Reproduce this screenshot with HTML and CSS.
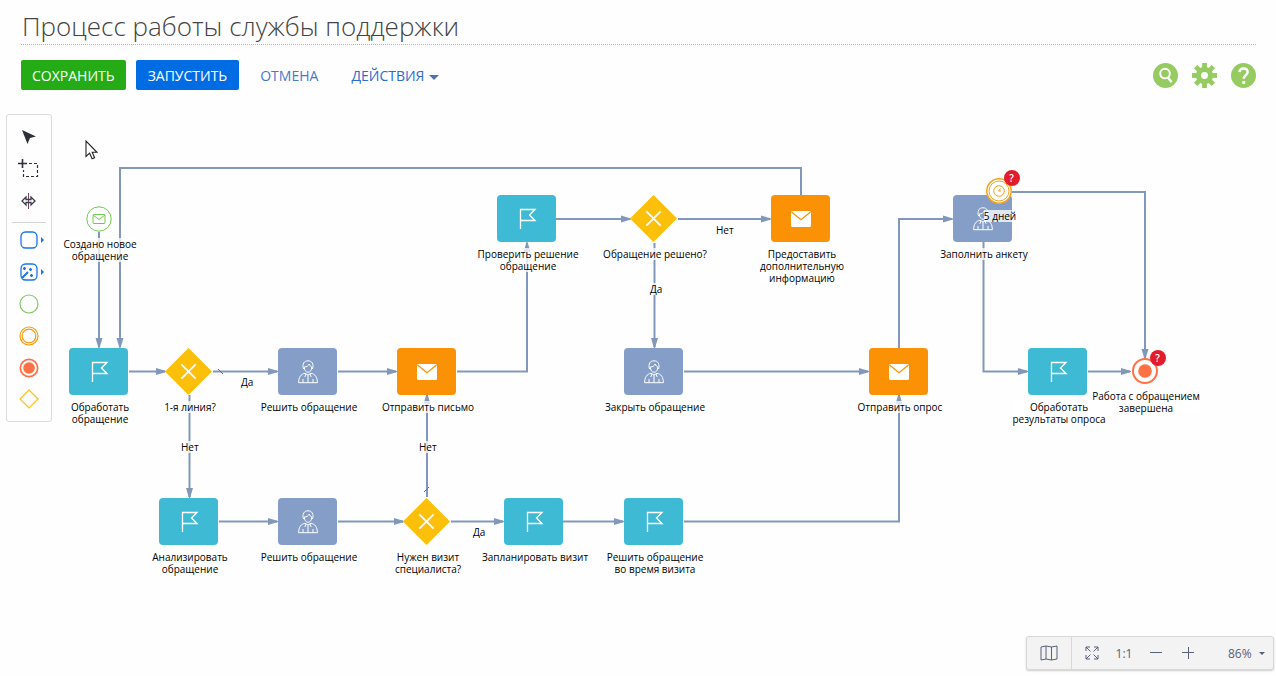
FILE: index.html
```html
<!DOCTYPE html>
<html lang="ru">
<head>
<meta charset="utf-8">
<meta name="viewport" content="width=device-width, initial-scale=1">
<title>Процесс работы службы поддержки</title>
<link rel="stylesheet" href="styles.css">
</head>
<body>
<svg class="sprite" aria-hidden="true">
  <symbol id="flag" viewBox="0 0 20 22"><path d="M3.500 21V1.500H18L12.500 7L18 12.500H3.500" fill="none" stroke="currentColor" stroke-width="1.300"/></symbol>
  <symbol id="user" viewBox="0 0 20 24"><g fill="none" stroke="currentColor"><path d="M5.500 9C4 4 6 .8 10 .8S16 4 14.500 9"/><path d="M6.300 7c2.500 0 4-1.200 5-3 .5 1.500 1.300 2.500 2.500 3 0 3-1.500 5.300-3.700 5.300S6.300 10 6.300 7z"/><path d="M7 13.300C3 14 .7 17 .6 22.700h18.800C19.300 17 17 14 13 13.300M7 13.300l3 1.700 3-1.700M10 15v7.700M5 22.500V19M15 22.500V19M8 14l-1.200 3M12 14l1.200 3"/></g></symbol>
  <symbol id="mail" viewBox="0 0 22 16"><rect x="1" y="0" width="20" height="16" rx="1.500" fill="currentColor"/><path d="M1.500 1L11 8.800 20.500 1" fill="none" stroke="#fb9104" stroke-width="1.200"/></symbol>
  <symbol id="cross" viewBox="0 0 46 46"><path d="M23 0L46 23 23 46 0 23z" fill="#fdc00a"/><path d="M16 16L30 30M30 16L16 30" stroke="#fff" stroke-width="1.600"/></symbol>
</svg>

<header class="header">
  <h1 class="title">Процесс работы службы поддержки</h1>
  <div class="actions">
    <button class="btn btn-save" type="button">СОХРАНИТЬ</button>
    <button class="btn btn-run" type="button">ЗАПУСТИТЬ</button>
    <button class="btn btn-cancel" type="button">ОТМЕНА</button>
    <button class="btn btn-menu" type="button" aria-haspopup="true">ДЕЙСТВИЯ<span class="caret"></span></button>
    <div class="tools">
      <button class="tool" type="button" aria-label="Поиск"><svg viewBox="0 0 26 26"><circle cx="13" cy="13" r="13" fill="#95cb61"/><circle cx="12.500" cy="11" r="5" fill="none" stroke="#fff" stroke-width="2"/><path d="M15.500 15l4 5" stroke="#fff" stroke-width="2.400"/></svg></button>
      <button class="tool" type="button" aria-label="Настройки"><svg viewBox="0 0 26 26"><g fill="#95cb61"><rect x="10.500" y="0" width="5" height="26"/><rect x="10.500" y="0" width="5" height="26" transform="rotate(45 13 13)"/><rect x="10.500" y="0" width="5" height="26" transform="rotate(90 13 13)"/><rect x="10.500" y="0" width="5" height="26" transform="rotate(135 13 13)"/><circle cx="13" cy="13" r="9"/></g><circle cx="13" cy="13" r="3.600" fill="#fff"/></svg></button>
      <button class="tool" type="button" aria-label="Справка"><svg viewBox="0 0 26 26"><circle cx="13" cy="13" r="13" fill="#95cb61"/><path d="M8.800 9.500C9 6.800 10.700 5.800 13 5.800c2.500 0 4.300 1.300 4.300 3.600 0 3.200-4 3.400-4 7.100" fill="none" stroke="#fff" stroke-width="2.600"/><rect x="11.800" y="18.800" width="3" height="3" fill="#fff"/></svg></button>
    </div>
  </div>
</header>

<main class="workspace">
  <div class="canvas">
    <svg class="wires" aria-hidden="true">
      <defs><marker id="arrow" viewBox="0 0 10 8" refX="9" refY="4" markerWidth="10" markerHeight="8" markerUnits="userSpaceOnUse" orient="auto"><path d="M0 .5L10 3.500V4.500L0 7.500z"/></marker></defs>
      <g transform="translate(0 -100)">
        <path d="M99 232V347"/>
        <path d="M801 195V168H120V347"/>
        <path d="M129 371.500H165"/>
        <path d="M213 371.500H277"/>
        <path d="M338 371.500H396"/>
        <path class="plain" d="M457 371.500H527V250"/>
        <path d="M527 260V243"/>
        <path d="M556 219H630"/>
        <path d="M678 219H770"/>
        <path d="M654.500 243V347"/>
        <path d="M684 371.500H868"/>
        <path d="M899 348V219H952"/>
        <path d="M983.500 242V371.500H1027"/>
        <path d="M1012 192H1145V358"/>
        <path d="M1088 371.500H1130"/>
        <path d="M189.500 395V497"/>
        <path d="M219 521.500H277"/>
        <path d="M338 521.500H403"/>
        <path d="M451 521.500H503"/>
        <path d="M563 521.500H623"/>
        <path d="M684 521.500H899V395"/>
        <path d="M427 497V395"/>
        <path class="slash" d="M218 369l5 5M424 492l5-5"/>
      </g>
    </svg>

    <div class="node n1"><span class="event"><svg viewBox="0 0 26 26" fill="none" stroke="#70c850"><circle cx="13" cy="13" r="12.200" fill="#fff"/><rect x="7" y="8.500" width="12" height="9" rx="1"/><path d="M7 9l6 4.500L19 9"/></svg></span><span class="label">Создано новое<br>обращение</span></div>
    <div class="node n2"><span class="shape teal"><svg class="flag"><use href="#flag"/></svg></span><span class="label">Обработать<br>обращение</span></div>
    <div class="node n3"><svg class="gate"><use href="#cross"/></svg><span class="label">1-я линия?</span></div>
    <div class="node n4"><span class="shape blue"><svg class="user"><use href="#user"/></svg></span><span class="label">Решить обращение</span></div>
    <div class="node n5"><span class="shape orange"><svg class="mail"><use href="#mail"/></svg></span><span class="label">Отправить письмо</span></div>
    <div class="node n6"><span class="shape teal"><svg class="flag"><use href="#flag"/></svg></span><span class="label">Проверить решение<br>обращение</span></div>
    <div class="node n7"><svg class="gate"><use href="#cross"/></svg><span class="label">Обращение решено?</span></div>
    <div class="node n8"><span class="shape orange"><svg class="mail"><use href="#mail"/></svg></span><span class="label">Предоставить<br>дополнительную<br>информацию</span></div>
    <div class="node n9"><span class="shape blue"><svg class="user"><use href="#user"/></svg></span><span class="label">Закрыть обращение</span></div>
    <div class="node n10"><span class="shape orange"><svg class="mail"><use href="#mail"/></svg></span><span class="label">Отправить опрос</span></div>
    <div class="node n11"><span class="shape blue"><svg class="user"><use href="#user"/></svg></span><span class="label">Заполнить анкету</span></div>
    <div class="node n12"><span class="shape teal"><svg class="flag"><use href="#flag"/></svg></span><span class="label">Обработать<br>результаты опроса</span></div>
    <div class="node n13"><span class="shape teal"><svg class="flag"><use href="#flag"/></svg></span><span class="label">Анализировать<br>обращение</span></div>
    <div class="node n14"><span class="shape blue"><svg class="user"><use href="#user"/></svg></span><span class="label">Решить обращение</span></div>
    <div class="node n15"><svg class="gate"><use href="#cross"/></svg><span class="label">Нужен визит<br>специалиста?</span></div>
    <div class="node n16"><span class="shape teal"><svg class="flag"><use href="#flag"/></svg></span><span class="label">Запланировать визит</span></div>
    <div class="node n17"><span class="shape teal"><svg class="flag"><use href="#flag"/></svg></span><span class="label">Решить обращение<br>во время визита</span></div>
    <div class="node n18"><span class="event"><svg viewBox="0 0 26 26" fill="none" stroke="#fba21c"><circle cx="13" cy="13" r="12.200" fill="#fff" stroke-width="1.500"/><circle cx="13" cy="13" r="10"/><circle cx="13" cy="13" r="5.300"/><path d="M14.500 10.500L12.500 13H15"/></svg><span class="badge">?</span></span><span class="label">5 дней</span></div>
    <div class="node n19"><span class="event"><svg viewBox="0 0 26 26"><circle cx="13" cy="13" r="12" fill="#fff" stroke="#ff7043" stroke-width="2"/><circle cx="13" cy="13" r="6.800" fill="#ff7043"/></svg><span class="badge">?</span></span><span class="label">Работа с обращением<br>завершена</span></div>

    <span class="label flow f1">Да</span>
    <span class="label flow f2">Нет</span>
    <span class="label flow f3">Нет</span>
    <span class="label flow f4">Да</span>
    <span class="label flow f5">Нет</span>
    <span class="label flow f6">Да</span>
    <svg class="pointer" viewBox="0 0 13 20" aria-hidden="true"><path d="M1 1v15.500l3.600-3.300 2.500 5.600 2.500-1.100L7.200 12.300H12z" fill="#fff" stroke="#222" stroke-width="1.100"/></svg>
  </div>

  <nav class="palette" aria-label="Элементы">
    <button type="button" aria-label="Выбор"><svg viewBox="0 0 32 32"><path d="M9 9l14 6.500-6 1.500-2.500 6z" fill="#2d3038"/></svg></button>
    <button type="button" aria-label="Выделить область"><svg viewBox="0 0 32 32" fill="none" stroke="#2d3038"><path d="M9.500 6v9M5 10.500h9" stroke-width="1.600"/><path d="M16 10.500H24.500V23.500H10.500V17" stroke-dasharray="3 2" stroke-width="1.200"/></svg></button>
    <button type="button" aria-label="Раздвинуть"><svg viewBox="0 0 32 32" fill="none" stroke="#3c3f49"><path d="M15.500 8v16" stroke="#74456f"/><path d="M13 12l-4 4 4 4v-2.500h5V20l4-4-4-4v2.500h-5z" stroke-width="1.300"/></svg></button>
    <hr>
    <button type="button" aria-label="Действия пользователя"><svg viewBox="0 0 32 32"><rect x="8" y="8" width="16" height="16" rx="4.500" fill="#fff" stroke="#1a74e8" stroke-width="1.300"/><path d="M28 13l3 3-3 3z" fill="#1a74e8"/></svg></button>
    <button type="button" aria-label="Действия системы"><svg viewBox="0 0 32 32"><rect x="8" y="8" width="16" height="16" rx="4.500" fill="#fff" stroke="#1a74e8" stroke-width="1.300"/><path d="M9 22l6-6" stroke="#1a74e8" stroke-width="2"/><path d="M11.500 11v3M10 12.500h3M17.500 12v3M16 13.500h3M18.500 18v3M17 19.500h3" stroke="#1a74e8" stroke-width="1.400"/><path d="M28 13l3 3-3 3z" fill="#1a74e8"/></svg></button>
    <button type="button" aria-label="Начальное событие"><svg viewBox="0 0 32 32"><circle cx="16" cy="16" r="9" fill="none" stroke="#7fc95f" stroke-width="1.200"/></svg></button>
    <button type="button" aria-label="Промежуточное событие"><svg viewBox="0 0 32 32" fill="none" stroke="#fb9a0a" stroke-width="1.200"><circle cx="16" cy="16" r="9"/><circle cx="16" cy="16" r="6.800"/></svg></button>
    <button type="button" aria-label="Завершающее событие"><svg viewBox="0 0 32 32"><circle cx="16" cy="16" r="8.700" fill="none" stroke="#ff7043" stroke-width="1.700"/><circle cx="16" cy="16" r="5.800" fill="#ff7043"/></svg></button>
    <button type="button" aria-label="Логический оператор"><svg viewBox="0 0 32 32"><path d="M16 6l9 9-9 9-9-9z" fill="none" stroke="#fbc218" stroke-width="1.200"/></svg></button>
  </nav>

  <div class="zoombar">
    <button class="map" type="button" aria-label="Карта"><svg viewBox="0 0 18 16" fill="none" stroke="#596079"><path d="M1 2l5-1 5.500 1L17 1v13l-5.500 1L6 14l-5 1zM6 1v13M11.500 2v13"/></svg></button>
    <button type="button" aria-label="По размеру экрана"><svg class="fit" viewBox="0 0 14 14" fill="none" stroke="#596079"><path d="M1 5V1h4M9 1h4v4M13 9v4H9M5 13H1V9M1 1l4.500 4.500M13 1L8.500 5.500M13 13L8.500 8.500M1 13l4.500-4.500"/></svg></button>
    <button type="button">1:1</button>
    <button type="button" aria-label="Уменьшить"><svg class="step" viewBox="0 0 12 12" stroke="#596079"><path d="M0 5.500h12"/></svg></button>
    <button type="button" aria-label="Увеличить"><svg class="step" viewBox="0 0 12 12" stroke="#596079"><path d="M0 5.500h12M6.500 0v12"/></svg></button>
    <label class="scale"><select aria-label="Масштаб"><option>86%</option></select><span class="caret"></span></label>
  </div>
</main>
</body>
</html>
```
FILE: styles.css
```css
* { box-sizing: border-box; }

body {
  margin: 0;
  min-height: 100vh;
  display: flex;
  flex-direction: column;
  background: #fefefe;
  color: #000;
  font-family: "Open Sans", "Noto Sans", sans-serif;
}

button, select {
  padding: 0;
  border: 0;
  background: none;
  font: inherit;
  color: inherit;
  cursor: pointer;
}

.sprite { position: absolute; width: 0; height: 0; }

.header { padding: 8px 20px 0 21px; }

.title {
  margin: 0;
  height: 37px;
  padding-left: 1px;
  border-bottom: 1px dotted #a9b4c8;
  color: #444;
  font-size: 26px;
  font-weight: 300;
  line-height: 36px;
}

.actions {
  display: flex;
  align-items: center;
  padding: 15px 0 10px;
}

.btn {
  height: 30px;
  padding: 1px 11px 0;
  border-radius: 2px;
  font-size: 14px;
  line-height: 29px;
  white-space: nowrap;
}

.btn-save { margin-right: 10px; background: #24ab16; color: #fff; }
.btn-run { margin-right: 10px; padding-left: 12px; padding-right: 12px; background: #006ce4; color: #fff; }
.btn-cancel { margin-right: 10px; color: #4a78c8; }
.btn-menu { padding-left: 12px; color: #2f6bd0; }

.caret {
  display: inline-block;
  margin-left: 5px;
  border: 5px solid transparent;
  border-top-color: #5272ae;
  border-bottom: 0;
  vertical-align: middle;
}

.tools { display: flex; gap: 14px; margin-left: auto; }
.tool { width: 25px; height: 25px; }
.tool svg { display: block; width: 25px; height: 25px; }

.workspace {
  position: relative;
  flex: 1;
  padding: 14px 6px;
}

.palette {
  position: relative;
  display: flex;
  flex-direction: column;
  align-items: center;
  width: 46px;
  padding: 6px 0 5px;
  border: 1px solid #dcdcdc;
  border-radius: 3px;
  background: #fefefe;
}

.palette button, .palette svg { display: block; width: 32px; height: 32px; }
.palette svg { overflow: visible; }
.palette hr { width: 34px; height: 1px; margin: 5px 0 1px; border: 0; background: #d4d4d4; }

.canvas { position: absolute; inset: 0; overflow: hidden; }

.wires { position: absolute; inset: 0; width: 100%; height: 100%; }
.wires path { fill: none; stroke: #8298bb; stroke-width: 2; marker-end: url(#arrow); }
.wires .plain, .wires .slash, .wires marker path { marker-end: none; }
.wires .slash { stroke: #5d7096; stroke-width: 1; }
.wires marker path { fill: #8298bb; stroke: none; }

.node {
  position: absolute;
  display: flex;
  flex-direction: column;
  align-items: center;
  gap: 6px;
  width: 62px;
}

.shape, .gate { flex: none; height: 47px; margin-right: 3px; }

.shape {
  display: flex;
  align-items: center;
  justify-content: center;
  width: 59px;
  border-radius: 4px;
  color: #fff;
}

.gate { width: 47px; }
.teal { background: #3fbad5; }
.blue { background: #859ec7; }
.orange { background: #fb9104; }
.flag { width: 20px; height: 22px; }
.user { width: 20px; height: 24px; }
.mail { width: 22px; height: 16px; }

.event { position: relative; width: 26px; height: 26px; margin-right: 3px; }
.event svg { display: block; width: 26px; height: 26px; }

.badge {
  position: absolute;
  top: -8px;
  right: -8px;
  width: 16px;
  height: 16px;
  border-radius: 50%;
  background: #e21c2a;
  color: #fff;
  font-size: 10px;
  font-weight: 600;
  line-height: 16px;
  text-align: center;
}

.label {
  background: rgba(255, 255, 255, 0.75);
  font-size: 10px;
  line-height: 12px;
  text-align: center;
  white-space: nowrap;
}

.flow { position: absolute; }

.n1 { left: 69px; top: 106px; }
.n2 { left: 69px; top: 248px; }
.n3 { left: 159px; top: 248px; }
.n4 { left: 278px; top: 248px; }
.n5 { left: 397px; top: 248px; }
.n6 { left: 497px; top: 95px; }
.n7 { left: 624px; top: 95px; }
.n8 { left: 771px; top: 95px; }
.n9 { left: 624px; top: 248px; }
.n10 { left: 869px; top: 248px; }
.n11 { left: 953px; top: 95px; }
.n12 { left: 1028px; top: 248px; }
.n13 { left: 159px; top: 398px; }
.n14 { left: 278px; top: 398px; }
.n15 { left: 397px; top: 398px; }
.n16 { left: 504px; top: 398px; }
.n17 { left: 624px; top: 398px; }
.n18 { left: 969px; top: 78px; }
.n19 { left: 1115px; top: 258px; }

.f1 { left: 241px; top: 276px; }
.f2 { left: 181px; top: 341px; }
.f3 { left: 419px; top: 341px; }
.f4 { left: 473px; top: 426px; }
.f5 { left: 716px; top: 124px; }
.f6 { left: 650px; top: 183px; }

.pointer { position: absolute; left: 85px; top: 40px; width: 13px; height: 20px; }

.zoombar {
  position: absolute;
  right: 2px;
  bottom: 6px;
  display: flex;
  align-items: center;
  height: 34px;
  border: 1px solid #d8d8d8;
  border-radius: 3px;
  background: #f3f3f3;
  box-shadow: 0 1px 2px rgba(0, 0, 0, 0.2);
  color: #596079;
  font-size: 12px;
}

.zoombar button { display: flex; align-items: center; justify-content: center; width: 32px; height: 100%; }
.zoombar .map { width: 45px; margin-right: 4px; border-right: 1px solid #d8d8d8; }
.map svg { width: 18px; height: 16px; }
.fit { width: 14px; height: 14px; }
.step { width: 12px; height: 12px; }
.scale { display: flex; align-items: center; margin-left: 24px; padding-right: 8px; }
.scale select { appearance: none; width: 26px; outline: 0; }
.scale .caret { border-width: 3px 3px 0; border-top-color: #596079; }
```
